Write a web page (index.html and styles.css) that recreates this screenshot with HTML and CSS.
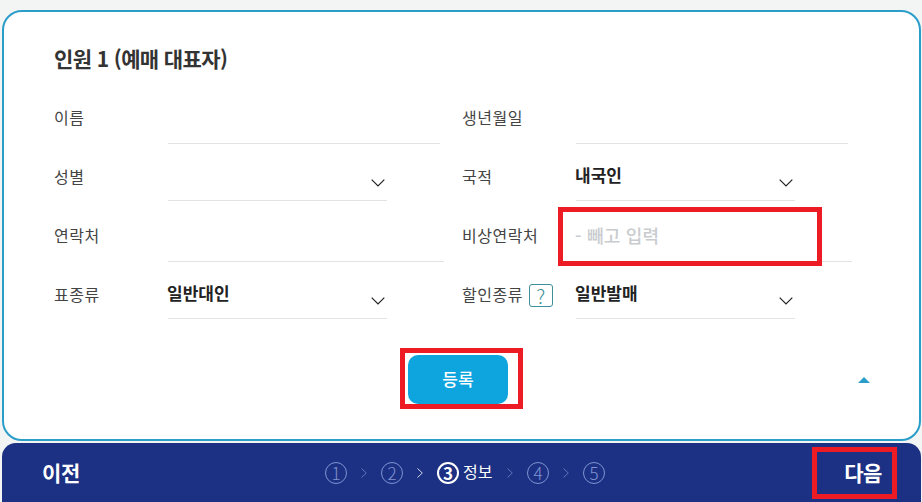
FILE: index.html
```html
<!DOCTYPE html>
<html lang="ko"><head>
<meta charset="utf-8">
<title>인원 정보</title>
<link rel="stylesheet" href="styles.css"></head><body>
<div class="page">
    <form class="card">
        <h2 class="title">인원 1 (예매 대표자)</h2>
        <div class="fields">
            <div class="field"><span class="label">이름</span><div class="value text"></div></div>
            <div class="field"><span class="label">생년월일</span><div class="value text"></div></div>

            <div class="field"><span class="label">성별</span>
                <div class="value select">
                    <svg class="chev" width="14" height="8" viewBox="0 0 14 8"><path d="M.7.7 7 7 13.3.7" fill="none" stroke="#222" stroke-width="1.2"/></svg>
                </div>
            </div>
            <div class="field"><span class="label">국적</span>
                <div class="value select"><b>내국인</b>
                    <svg class="chev" width="14" height="8" viewBox="0 0 14 8"><path d="M.7.7 7 7 13.3.7" fill="none" stroke="#222" stroke-width="1.2"/></svg>
                </div>
            </div>

            <div class="field"><span class="label">연락처</span><div class="value text long"></div></div>
            <div class="field"><span class="label">비상연락처</span><div class="value text long"><span class="hint">- 빼고 입력</span></div></div>

            <div class="field"><span class="label">표종류</span>
                <div class="value select"><b>일반대인</b>
                    <svg class="chev" width="14" height="8" viewBox="0 0 14 8"><path d="M.7.7 7 7 13.3.7" fill="none" stroke="#222" stroke-width="1.2"/></svg>
                </div>
            </div>
            <div class="field"><span class="label">할인종류<i class="help">?</i></span>
                <div class="value select"><b>일반발매</b>
                    <svg class="chev" width="14" height="8" viewBox="0 0 14 8"><path d="M.7.7 7 7 13.3.7" fill="none" stroke="#222" stroke-width="1.2"/></svg>
                </div>
            </div>
        </div>
        <div class="actions">
            <button type="button" class="submit">등록</button>
            <span class="collapse"></span>
        </div>
    </form>

    <nav class="bar">
        <a class="nav">이전</a>
        <div class="steps">
            <span class="step">1</span><svg class="sep" width="6" height="10" viewBox="0 0 6 10"><path d="M.5.5 5.3 5 .5 9.5" fill="none" stroke="#5f75bb"/></svg>
            <span class="step">2</span><svg class="sep" width="6" height="10" viewBox="0 0 6 10"><path d="M.5.5 5.3 5 .5 9.5" fill="none" stroke="#cfd6ee"/></svg>
            <span class="step on">3</span><span class="step-name">정보</span><svg class="sep" width="6" height="10" viewBox="0 0 6 10"><path d="M.5.5 5.3 5 .5 9.5" fill="none" stroke="#5f75bb"/></svg>
            <span class="step">4</span><svg class="sep" width="6" height="10" viewBox="0 0 6 10"><path d="M.5.5 5.3 5 .5 9.5" fill="none" stroke="#5f75bb"/></svg>
            <span class="step">5</span>
        </div>
        <a class="nav">다음</a>
    </nav>

    <!-- red marks drawn over the screenshot -->
    <div class="mark mark-hint"></div>
    <div class="mark mark-submit"></div>
    <div class="mark mark-next"></div>
</div>
</body></html>
```

FILE: styles.css
```css
*{box-sizing:border-box;}
html,body{margin:0;padding:0;}
body{font-family:"Noto Sans CJK KR","Noto Sans",sans-serif;font-size:16px;color:#444;background:#f3f4f4;}
.page{position:relative;width:922px;height:502px;overflow:hidden;padding:10px 1px 0 2px;}

.card{height:431px;background:#fff;border:2px solid #2b9dc9;border-radius:20px;padding:0 0 0 50px;}
.title{margin:0;padding-top:32px;height:76px;font-size:21px;line-height:28px;font-weight:700;color:#333;letter-spacing:-.6px;}

.fields{display:grid;grid-template-columns:408px 408px;grid-auto-rows:59px;}
.field{display:flex;}
.label{width:114px;flex:none;display:flex;align-items:center;height:58px;white-space:nowrap;letter-spacing:.5px;}
.value{position:relative;display:flex;border-bottom:1px solid #e2e4e4;color:#222;}
.value b{margin-left:-1px;font-size:17px;font-weight:700;line-height:56px;}
.value.text{width:272px;height:56px;}
.value.long{width:276px;}
.value.select{width:219px;height:54px;}
.chev{position:absolute;right:2px;top:32px;}
.hint{margin-left:-1px;font-size:18px;line-height:58px;color:#c9cccf;font-weight:500;letter-spacing:.2px;}
.help{display:inline-block;width:24px;height:23px;margin:2px 0 0 6px;border:1px solid #3d8f99;border-radius:3px;color:#3d8f99;font-style:normal;font-size:20px;font-weight:300;line-height:21px;text-align:center;}

.actions{display:flex;justify-content:space-between;align-items:center;margin-top:31px;padding:0 49px 0 354px;}
.submit{width:100px;height:49px;padding:0 0 3px;border:0;border-radius:10px;background:#0ea5de;color:#fff;font-family:inherit;font-size:17px;font-weight:500;}
.collapse{width:0;height:0;border-left:6px solid transparent;border-right:6px solid transparent;border-bottom:6px solid #2b9dc9;}

.bar{display:flex;align-items:center;justify-content:space-between;height:59px;margin-top:2px;padding:0 39px 0 40px;background:#1c3183;border-radius:14px 14px 0 0;color:#fff;}
.nav{font-size:21px;font-weight:700;line-height:59px;letter-spacing:-.4px;}
.steps{display:flex;align-items:center;margin-left:6px;color:#8093d2;}
.step{width:22px;height:22px;border:1px solid #8093d2;border-radius:50%;font-size:17px;font-weight:300;line-height:19px;text-align:center;}
.step.on{border:2px solid #fff;color:#fff;font-weight:700;line-height:17px;}
.step-name{margin:-3px 0 0 4px;font-size:16px;line-height:21px;color:#fff;width:30px;}
.sep{margin:0 14px;}

.mark{position:absolute;border:5px solid #ed1c24;}
.mark-hint{left:558px;top:207px;width:264px;height:59px;}
.mark-submit{left:400px;top:348px;width:123px;height:61px;}
.mark-next{left:812px;top:447px;width:85px;height:52px;}
```
